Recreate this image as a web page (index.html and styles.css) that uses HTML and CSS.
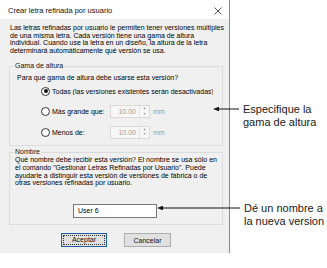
FILE: index.html
```html
<!DOCTYPE html>
<html lang="es">
<head>
  <meta charset="UTF-8" />
  <title>Crear letra refinada por usuario</title>
  <link rel="stylesheet" href="styles.css">
</head>
<body>
  <div class="page">
    <div class="dialog">
      <div class="titlebar">
        <span class="title">Crear letra refinada por usuario</span>
        <svg class="close" width="8" height="8" viewBox="0 0 8 8">
          <path d="M0.5 0.5 L7.5 7.5 M7.5 0.5 L0.5 7.5" stroke="#333" stroke-width="0.8" fill="none"/>
        </svg>
      </div>

      <div class="content">
        <p class="intro">Las letras refinadas por usuario le permiten tener versiones múltiples<br>de una misma letra. Cada versión tiene una gama de altura<br>individual. Cuando use la letra en un diseño, la altura de la letra<br>determinará automáticamente qué versión se usa.</p>

        <fieldset class="group">
          <legend>Gama de altura</legend>
          <div class="question">Para qué gama de altura debe usarse esta versión?</div>
          <div class="options">
            <div class="option">
              <span class="radio checked"></span>
              <span class="label-wide">Todas (las versiones existentes serán desactivadas)</span>
            </div>
            <div class="option">
              <span class="radio"></span>
              <span class="label">Más grande que:</span>
              <span class="spin">
                <span class="spin-value">10.00</span>
                <span class="spin-btns"><i>▲</i><i>▼</i></span>
              </span>
              <span class="unit">mm</span>
            </div>
            <div class="option">
              <span class="radio"></span>
              <span class="label">Menos de:</span>
              <span class="spin">
                <span class="spin-value">10.00</span>
                <span class="spin-btns"><i>▲</i><i>▼</i></span>
              </span>
              <span class="unit">mm</span>
            </div>
          </div>
        </fieldset>

        <fieldset class="group group-name">
          <legend>Nombre</legend>
          <p class="name-help">Qué nombre debe recibir esta versión? El nombre se usa sólo en el comando "Gestionar Letras Refinadas por Usuario". Puede ayudarle a distinguir esta versión de versiones de fábrica o de otras versiones refinadas por usuario.</p>
          <div class="name-input">User 6</div>
        </fieldset>

        <div class="buttons">
          <button class="btn btn-default"><span>Aceptar</span></button>
          <button class="btn">Cancelar</button>
        </div>
      </div>
    </div>

    <!-- callouts -->
    <div class="callout callout-range">
      <svg width="26" height="6" viewBox="0 0 26 6">
        <path d="M0 3 L6 0.8 L6 5.2 Z" fill="#111"/>
        <path d="M5 3 H26" stroke="#111" stroke-width="1"/>
      </svg>
      <div class="callout-text">Especifique la<br>gama de altura</div>
    </div>
    <div class="callout callout-name">
      <svg width="83" height="6" viewBox="0 0 83 6">
        <path d="M0 3 L6 0.8 L6 5.2 Z" fill="#111"/>
        <path d="M5 3 H83" stroke="#111" stroke-width="1"/>
      </svg>
      <div class="callout-text">Dé un nombre a<br>la nueva version</div>
    </div>
  </div>
</body>
</html>
```

FILE: styles.css
```css
body {
  margin: 0;
  background: #ffffff;
  font-family: 'Liberation Sans', Arial, sans-serif;
  color: #000;
}

.page {
  position: relative;
  width: 327px;
  height: 268px;
}

.dialog {
  width: 229px;
  border-right: 1px solid #8a8a8a;
  font-size: 7px;
}

.titlebar {
  height: 19px;
  display: flex;
  align-items: center;
  justify-content: space-between;
  padding: 0 7px 0 8px;
  background: #ffffff;
}

.title {
  font-size: 7.5px;
  color: #111;
  padding-top: 2px;
}

.close {
  margin-top: 2px;
}

.content {
  background: #f0f0f0;
  padding: 5px 6px 6px 9px;
}

.intro {
  margin: 0 -5px 8px 1px;
  line-height: 7.6px;
  white-space: nowrap;
}

.group {
  margin: 0;
  border: 1px solid #dcdcdc;
  padding: 0 4px 6px;
  min-inline-size: 0;
}

.group legend {
  padding: 0 1px;
  line-height: 8px;
  color: #111;
}

.question {
  margin: 4px 0 2px 3px;
  line-height: 8px;
}

.options {
  display: flex;
  flex-direction: column;
  gap: 6.5px;
  padding-left: 27px;
}

.option {
  display: flex;
  align-items: center;
  height: 14px;
}

.radio {
  width: 7px;
  height: 7px;
  border: 0.8px solid #333;
  border-radius: 50%;
  background: #fff;
  margin-right: 2px;
  display: flex;
  align-items: center;
  justify-content: center;
}

.radio.checked::after {
  content: '';
  width: 4px;
  height: 4px;
  border-radius: 50%;
  background: #111;
}

.label-wide {
  white-space: nowrap;
  width: 161px;
  overflow: hidden;
}

.label {
  width: 58px;
}

.spin {
  display: flex;
  width: 40px;
  height: 13px;
  border: 1px solid #d9d9d9;
  background: #f7f7f7;
  box-sizing: border-box;
}

.spin-value {
  flex: 1;
  text-align: right;
  padding-right: 3px;
  color: #9a9a9a;
  line-height: 11px;
}

.spin-btns {
  width: 9px;
  display: flex;
  flex-direction: column;
  border-left: 1px solid #e2e2e2;
}

.spin-btns i {
  flex: 1;
  font-style: normal;
  font-size: 3px;
  line-height: 5.5px;
  text-align: center;
  color: #777;
}

.unit {
  margin-left: 3px;
  color: #9a9a9a;
}

.group-name {
  margin-top: 2px;
}

.name-help {
  margin: 0 -4px 0 1px;
  line-height: 7.7px;
}

.name-input {
  margin: 17px 0 0 59px;
  width: 84px;
  height: 14px;
  box-sizing: border-box;
  border: 1px solid #7a7a7a;
  background: #fff;
  padding-left: 4px;
  line-height: 12px;
}

.buttons {
  display: flex;
  justify-content: center;
  gap: 17px;
  margin-top: 8px;
}

.btn {
  width: 47px;
  height: 14px;
  padding: 0;
  font-family: inherit;
  font-size: 7px;
  color: #111;
  background: #e1e1e1;
  border: 1px solid #adadad;
  box-sizing: border-box;
}

.btn-default {
  width: 46px;
  border-color: #1f5fa8;
  padding: 1px;
}

.btn-default span {
  display: block;
  height: 100%;
  outline: 1px dotted #333;
  outline-offset: -1px;
  line-height: 10px;
}

.callout {
  position: absolute;
  display: flex;
  align-items: flex-start;
}

.callout svg {
  margin-top: 3px;
  flex-shrink: 0;
}

.callout-text {
  font-size: 11px;
  line-height: 13px;
  color: #1a1a1a;
  margin-left: 4px;
}

.callout-range {
  left: 213px;
  top: 103px;
}

.callout-name {
  left: 157px;
  top: 202px;
}
```
